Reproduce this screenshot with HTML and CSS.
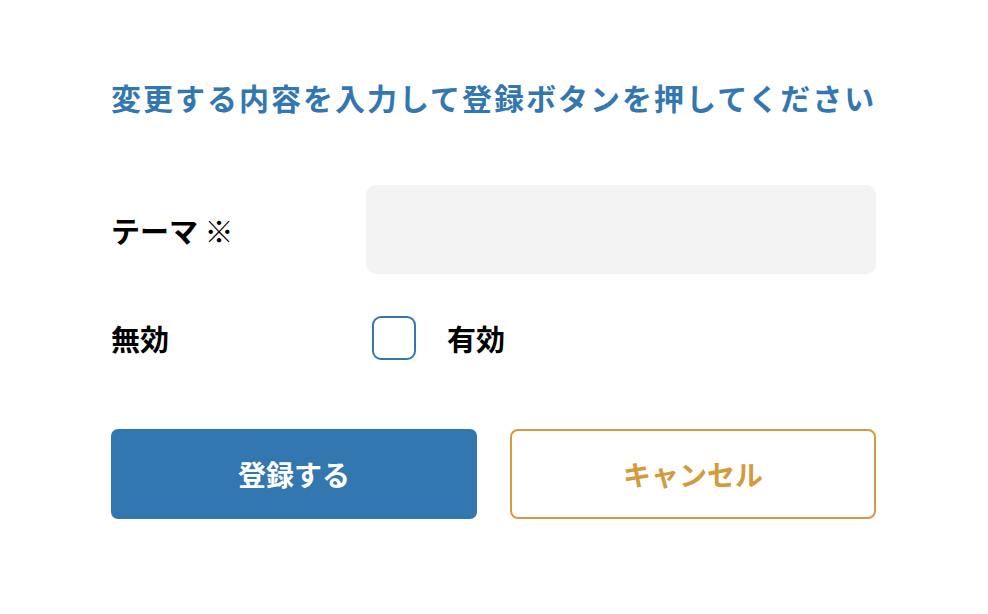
FILE: index.html
```html
<!DOCTYPE html>
<html lang="ja">
<head>
<meta charset="utf-8">
<link rel="stylesheet" href="styles.css">
</head>
<body>
<main class="form">
  <h1 class="title">変更する内容を入力して登録ボタンを押してください</h1>
  <div class="row row-theme">
    <label class="label">テーマ ※</label>
    <input class="text-input" type="text">
  </div>
  <div class="row row-toggle">
    <span class="label">無効</span>
    <div class="check-wrap">
      <span class="checkbox"></span>
      <span class="check-label">有効</span>
    </div>
  </div>
  <div class="buttons">
    <button class="btn btn-primary">登録する</button>
    <button class="btn btn-cancel">キャンセル</button>
  </div>
</main>
</body>
</html>
```

FILE: styles.css
```css
* { box-sizing: border-box; }
html, body { margin: 0; padding: 0; background: #fff; }
body {
  font-family: "Noto Sans CJK JP", "Noto Sans", sans-serif;
  color: #000;
}
.form {
  width: 765px;
  margin-left: 111px;
  padding-top: 76px;
}
.title {
  margin: 0;
  font-size: 30px;
  line-height: 42px;
  font-weight: 700;
  color: #3377b1;
  letter-spacing: 2px;
  white-space: nowrap;
}
.row {
  display: grid;
  grid-template-columns: 255px 1fr;
  align-items: center;
}
.row-theme { margin-top: 67px; }
.row-toggle { margin-top: 42px; }
.label {
  font-size: 29px;
  font-weight: 700;
  line-height: 40px;
}
.text-input {
  height: 89px;
  border: none;
  border-radius: 10px;
  background: #f3f3f3;
  outline: none;
}
.check-wrap {
  display: flex;
  align-items: center;
  padding-left: 6px;
}
.checkbox {
  width: 44px;
  height: 44px;
  border: 2px solid #3377b1;
  border-radius: 9px;
}
.check-label {
  margin-left: 31px;
  font-size: 29px;
  font-weight: 700;
  line-height: 40px;
}
.buttons {
  margin-top: 69px;
  display: grid;
  grid-template-columns: 1fr 1fr;
  gap: 33px;
}
.btn {
  height: 90px;
  font-family: inherit;
  font-size: 28px;
  font-weight: 700;
  border-radius: 7px;
  cursor: pointer;
}
.btn-primary {
  background: #3377b1;
  color: #fff;
  border: none;
}
.btn-cancel {
  background: #fff;
  color: #d49b3e;
  border: 2px solid #d49b3e;
  border-radius: 8px;
}
```
